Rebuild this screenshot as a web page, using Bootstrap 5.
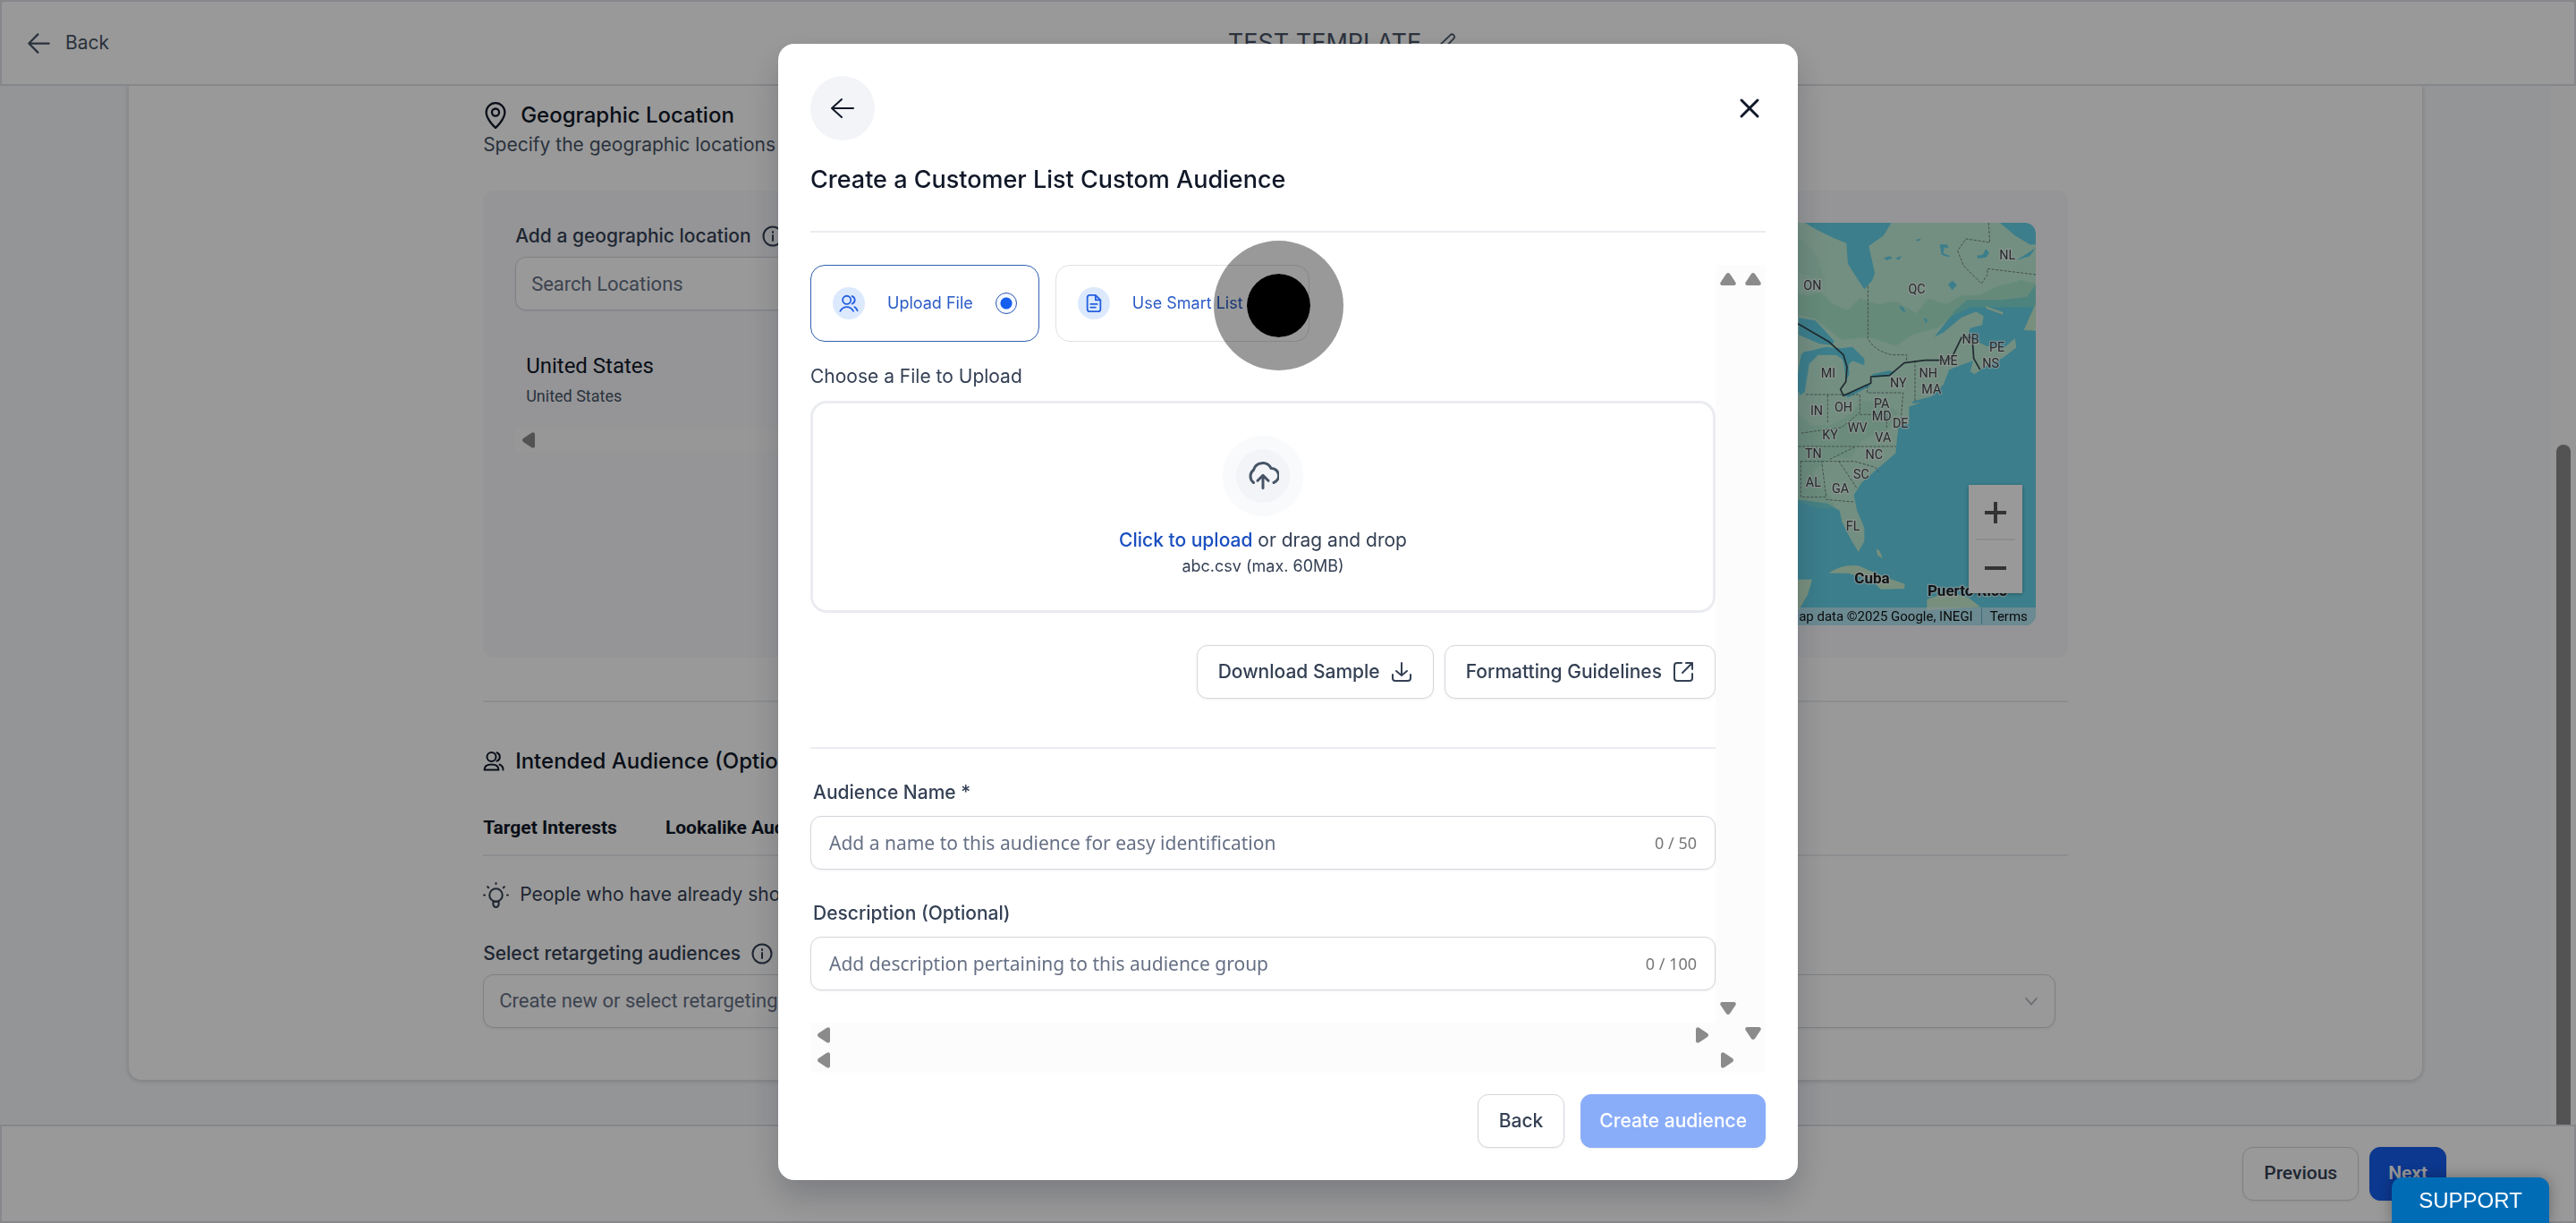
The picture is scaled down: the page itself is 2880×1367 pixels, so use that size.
<!DOCTYPE html>
<html lang="en">
<head>
<meta charset="utf-8">
<meta name="viewport" content="width=device-width, initial-scale=1">
<title>Create a Customer List Custom Audience</title>
<link href="https://cdn.jsdelivr.net/npm/bootstrap@5.3.0/dist/css/bootstrap.min.css" rel="stylesheet">
<style>
:root{--ink:#101828;--body:#344054;--muted:#667085;--line:#d3d6dc;--soft:#eaecf0;--blue:#155eef}
body{font-family:Inter,"Liberation Sans",sans-serif;font-size:21px;line-height:30px;color:var(--body);background:#f7f9fc}
.shell{height:100vh}
svg{flex:none;fill:none;stroke:currentColor;stroke-width:2;stroke-linecap:round;stroke-linejoin:round}
.roboto{font-family:Roboto,"Liberation Sans",sans-serif}
.topbar{height:96px;border:2px solid #dfe1e6;padding:0 28px}
.crumb{color:#475467;text-decoration:none;gap:16px}
.doc-title{font-size:27px;color:#475467;padding-left:120px}
.workarea{min-height:0}
.sheet{max-width:2564px;width:90%;padding:18px 0 58px;border-radius:0 0 14px 14px;box-shadow:0 1px 5px 1px rgba(16,24,40,.16)}
.sheet-inner{width:69.1%}
.gutter{width:28px;background:#fcfcfc}
.gutter-thumb{width:16px;height:65.5%;background:#8b8b8b;border-radius:8px 8px 0 0}
.section-title{font-size:24px;line-height:30px;font-weight:500;color:var(--ink)}
.title-geo{gap:14px}
.intro{margin-top:3px;color:#475467}
.geo-panel{background:#f8f9fc;border-radius:12px;padding:36px;margin-top:36px;height:522px}
.field-label{font-weight:500}
.field{height:60px;border:1px solid var(--line);border-radius:12px;padding:0 20px;font-size:21px;color:var(--body);box-shadow:0 1px 3px rgba(16,24,40,.06)}
.field::placeholder{color:var(--muted)}
.roboto.field{font-size:22px;padding:0 17px}
.place{padding:47px 12px 20px}
.place-name{font-size:24px;color:var(--ink)}
.place-sub{font-size:18px;color:#475467}
.map-box{border-radius:12px;background:#64d2e8}
.map-credit{right:0;bottom:0;height:20px;font-size:15px;line-height:20px;color:#111;background:rgba(228,242,248,.62);padding:0 9px}
.map-credit a{color:#111;text-decoration:none;border-left:1px solid #64b4c8;padding-left:9px;margin-left:9px}
.map-zoom{right:15px;bottom:36px;width:60px;height:121px;background:#fff;box-shadow:0 1px 4px rgba(0,0,0,.3)}
.map-zoom button{border:0;background:none;color:#555;height:60px}
.map-zoom svg{stroke-width:4;stroke-linecap:butt}
.state-names{font:400 43px Roboto,sans-serif;fill:#44484e;stroke:#fff;stroke-opacity:.6;stroke-width:8px;paint-order:stroke}
.land-names{font:700 51px Roboto,sans-serif;fill:#1d2226;stroke:#fff;stroke-opacity:.6;stroke-width:8px;paint-order:stroke}
.rule{border-top:2px solid var(--soft)}
.title-aud{margin-top:51px}
.tabs-line{border-bottom:2px solid var(--soft);height:51px;gap:54px;margin-top:40px}
.tabs-line button{border:0;background:none;padding:0;font-weight:700;font-size:21px;color:var(--ink)}
.label-ret{margin-top:36px}
.pick{height:60px;border:1px solid var(--line);border-radius:12px;padding:0 17px;font-size:22px;line-height:58px;color:var(--muted);margin-right:14px;width:auto;box-shadow:0 1px 3px rgba(16,24,40,.08);background-size:20px 20px;background-position:right 16px center;--bs-form-select-bg-img:url("data:image/svg+xml,%3csvg xmlns='http://www.w3.org/2000/svg' viewBox='0 0 22 22'%3e%3cpath fill='none' stroke='%23b4bac4' stroke-width='2' d='m4 7 7 8 7-8'/%3e%3c/svg%3e")}
.bottombar{height:110px;border:2px solid #dfe1e6;padding:0 143px;gap:12px}
.act{height:60px;border-radius:12px;border:1px solid var(--line);background:#fff;color:var(--body);font-size:21px;font-weight:500;padding:0 23px;box-shadow:0 1px 3px rgba(16,24,40,.06)}
.act:hover{background:#f9fafb;border-color:var(--line)}
.act-blue,.act-blue:hover{background:var(--blue);border-color:var(--blue);color:#fff;font-weight:600;padding:0 20px}
.act-off:disabled{background:#8aadf9;border-color:#8aadf9;color:#fff;opacity:1;padding:0 20px}
.modal-backdrop.show{opacity:.4}
.modal-dialog.aud{max-width:1140px;margin:49px auto 0}
.aud .modal-content{border:0;border-radius:18px;padding:36px;color:var(--body);box-shadow:0 18px 36px rgba(16,24,40,.22)}
.round-back{width:72px;height:72px;background:#f2f4f7;color:var(--ink);padding:0}
.bare{border:0;background:none;color:var(--ink);padding:0}
.aud-title{font-size:27px;line-height:36px;font-weight:500;color:var(--ink);margin:26px 0 39px}
.pane{padding-top:36px}
.sources{gap:18px}
.choice{height:86px;border:1px solid #dfe1e6;border-radius:16px;padding:0 24px;gap:25px;font-size:18px;color:#2a5bc5}
.choice.on{border-color:#3060b0}
.bubble{width:36px;height:36px;background:#dce9fd;color:#2560e0}
.choice .form-check-input{width:24px;height:24px;margin:0;border:1px solid #2a55b0;background-color:#f5f9ff}
.choice .form-check-input:checked{background-image:radial-gradient(circle,#155eef 0 6px,transparent 7px)}
.drop{height:237px;border:3px solid var(--soft);border-radius:18px;padding-top:36px}
.halo{width:90px;height:90px;background:#f2f4f7;border:15px solid #f9fafb;color:#475467}
.lead-in{margin-top:12px}
.drop a{color:#1a4fbf;font-weight:500;text-decoration:none}
.hint{font-size:18px;line-height:28px}
.tools{gap:12px;margin-top:36px}
.split{margin-top:54px}
.cap{padding-left:3px;margin:34px 0 11px}
.noto{font-family:"Noto Sans","Open Sans",sans-serif}
.counted .field{padding-right:110px}
.last{margin-bottom:36px}
.count{right:21px;top:0;line-height:60px;font-size:18px;color:#777}
.rail{width:28px;background:#fcfcfc;color:#8b8b8b;padding:9px 0}
.rail svg,.strip svg{fill:currentColor;stroke:none}
.strip{height:28px;background:#fcfcfc;color:#8b8b8b;padding:0 8px}
.corner{width:28px;background:#fcfcfc}
.finish{gap:18px}
.help-tab{right:30px;bottom:0;z-index:1070;width:176px;height:51px;border:0;border-radius:12px 12px 0 0;background:#006cb6;color:#fff;font:24px/51px "Liberation Sans",Arial,sans-serif;box-shadow:0 0 16px rgba(0,0,0,.3);padding:0}
.tap{left:calc(50% - 83px);top:269px;width:145px;height:145px;border:37px solid rgba(0,0,0,.4);background:#000;background-clip:padding-box;z-index:1071;pointer-events:none}
</style>
</head>
<body>
<svg class="d-none">
 <symbol id="left" viewBox="0 0 24 24"><path d="M22 12H2m9-9-9 9 9 9"/></symbol>
 <symbol id="info" viewBox="0 0 24 24"><circle cx="12" cy="12" r="10.5"/><path d="M12 11v6m0-10v1"/></symbol>
 <symbol id="users" viewBox="0 0 24 24"><circle cx="9.500" cy="7" r="5"/><path d="M1.500 21.500c0-4 3.500-6 8-6s8 2 8 6zM15.500 2.300a5 5 0 0 1 0 9.400M18.500 15.500c2.500 1 4 3 4 6"/></symbol>
 <symbol id="tri-l" viewBox="0 0 14 18"><path d="M14 2v14q-1 3-4 1L1 11q-2-2 0-4l9-6q3-2 4 1z"/></symbol>
 <symbol id="tri-r" viewBox="0 0 14 18"><path d="M0 2v14q1 3 4 1l9-6q2-2 0-4L4 1Q1-1 0 2z"/></symbol>
 <symbol id="tri-u" viewBox="0 0 18 14"><path d="M2 14h14q3-1 1-4L11 1Q9-1 7 1l-6 9q-2 3 1 4z"/></symbol>
 <symbol id="tri-d" viewBox="0 0 18 14"><path d="M2 0h14q3 1 1 4l-6 9q-2 2-4 0L1 4Q-1 1 2 0z"/></symbol>
</svg>

<div class="shell d-flex flex-column overflow-hidden">
 <header class="topbar bg-white d-flex align-items-center position-relative flex-shrink-0">
  <a href="#" class="crumb d-flex align-items-center"><svg width="27" height="27"><use href="#left"/></svg>Back</a>
  <div class="doc-title d-flex align-items-center gap-3 position-absolute start-50 translate-middle-x text-nowrap"><span>TEST TEMPLATE</span>
   <svg width="22" height="22" viewBox="0 0 24 24"><path d="M2 22l1-6L17 2.500a2.800 2.800 0 0 1 4.500 4L8 20.500z"/></svg></div>
 </header>

 <div class="workarea d-flex flex-grow-1 overflow-hidden">
  <main class="flex-grow-1">
   <div class="sheet bg-white mx-auto"><div class="sheet-inner mx-auto">
    <h2 class="section-title title-geo d-flex align-items-center mb-0"><svg width="28" height="30" viewBox="0 0 24 26"><path d="M12 25s9-8 9-15A9 9 0 0 0 3 10c0 7 9 15 9 15z"/><circle cx="12" cy="10" r="3.500"/></svg>Geographic Location</h2>
    <div class="intro">Specify the geographic locations you want to target</div>
    <section class="geo-panel d-flex gap-4">
     <div class="w-50 d-flex flex-column">
      <label for="loc" class="field-label d-flex align-items-center gap-2 mb-2"><span class="me-1">Add a geographic location</span><svg width="24" height="24"><use href="#info"/></svg></label>
      <input id="loc" class="field roboto w-100 bg-white" type="text" placeholder="Search Locations">
      <div class="place roboto"><div class="place-name">United States</div><div class="place-sub mt-1">United States</div></div>
      <div class="strip d-flex align-items-center justify-content-between"><svg width="14" height="18"><use href="#tri-l"/></svg><svg width="14" height="18"><use href="#tri-r"/></svg></div>
     </div>
     <div class="map-box flex-grow-1 position-relative overflow-hidden roboto">
      <svg class="position-absolute end-0 top-0" width="295" height="450" viewBox="0 0 885 1350">
       <g transform="translate(75 -12)" stroke="none">
        <path fill="#c0eed8" d="M-75 12H35l40 23 55 27 45 18 5 70 35 55 20 30 27-30 8-25-20-90 50-35 25-43h365l50 43 50 30h20v135l-30 40-80 10H580l-40 35-70 90 30-15 60-50 50-20 25 15-5 30-40 10-10 30 65 30 55 10 40-35 5 30-45 35-60 30-35 25-15-10 10-35-30 10-50 20-20 50-40 40-60 15-15 20v55l-35 10-5 40-5 50-65 55-50 45-25 40 10 50 25 60v45l-20 35-25-40-30-60-8-38-40-24-90-12-90-5z"/>
        <path fill="#c8efd0" d="M770 372l40-90v92zM640 290l60 22 0 8-55-20zM384 620l40-6-35 14z"/>
        <g fill="#97e2c2" opacity=".55"><path d="M-20 240l60 15 50-10 40 40 50 20 40-40 60 20 60-10 70 40 40-50 60 20 50-30 60 0 60-30 80-20 100 20v60l-60 10H590l-60 30-50 40-80 20-60 40-90-30-90 10-90-70-80-20-30-20z"/><path d="M0 640l60 50 60 0 60-30 50-50 70 0 50 40-40 60-80 30-40 60-70 0-60 50 50 60 30 60-60 0-90-30z" opacity=".6"/><path d="M15 60l60 60 30 90-90-30z" opacity=".4"/></g>
        <g fill="#64d2e8"><path d="M15 330l55 10 25 25 40 45-10 12-40-4-70-30zM60 440l45-12 50 5 40-5 40 40 0 22-40-15-15 15-10-15-30-20-60 0-30 30-15 95-15 10-15-30 10-60 8-45 10-10z"/><path d="M150 440l30 30 5 50-10 20-10-60zM165 590l80-38 12 6-75 40zM262 520l55-12 20 6-20 12-55 6zM300 130l20-6 10 6-20 8zM338 132l22-10-8 14zM488 85l25 0 5 12-15-2-3 20 22 8-6 4-22-8zM612 122l20-2 10-20 12 12-10 16-28 4zM745 138l65-42-20 28zM516 220l14-14 16 14-16 18zM352 290l14 6 8 18-14-8zM405 70l22-6-10 10zM434 330l14 8-8 12z"/></g>
       </g>
       <g transform="translate(0 -147) scale(1 1.033)" fill="#c8efd0" stroke="none"><path d="M190 1280q40-30 100-25l70 30 85 30 0 15-80 2-30-30-80-22zM30 1300l105 0-15 50-30 50-60 10zM520 1365l70-25 70 20 40 30-180 10zM350 1200l12 8 10 25-18-12z"/></g>
       <g transform="translate(75 -12)"><path stroke="#6f8580" stroke-width="3" stroke-dasharray="7 7" d="M247 225v175q20 40 80 55h50v18M652 12l4 66-80-12-28 40 20 50 60 60 20-30 0-20 162 20M405 475v135M245 560v22h120l-8 100M40 588h180v60l-60 50-140 20M112 590v90M15 762h325M120 805l80-40M22 812h180l70 20 10 15M22 812v120h85l-15-120M150 812l60 90M107 940l90 8M220 655h90v50"/>
        <path stroke="#33474f" stroke-width="5" d="M-40 325l60 30 95 55 50 45 12 40-4 50-18 25 10 22 92-42v-22l62-4 50-42 70-9h75l15-10 32-66 36 0 5 70 20 35"/></g>
       <g class="state-names" text-anchor="middle"><text x="136" y="226">ON</text><text x="486" y="236">QC</text><text x="790" y="123">NL</text><text x="666" y="406">NB</text><text x="755" y="433">PE</text><text x="734" y="487">NS</text><text x="592" y="477">ME</text><text x="524" y="520">NH</text><text x="535" y="573">MA</text><text x="424" y="551">NY</text><text x="189" y="518">MI</text><text x="150" y="644">IN</text><text x="240" y="632">OH</text><text x="368" y="622">PA</text><text x="368" y="663">MD</text><text x="431" y="686">DE</text><text x="287" y="703">WV</text><text x="195" y="726">KY</text><text x="373" y="736">VA</text><text x="139" y="789">TN</text><text x="343" y="793">NC</text><text x="300" y="857">SC</text><text x="139" y="884">AL</text><text x="230" y="906">GA</text><text x="272" y="1032">FL</text></g>
       <g class="land-names" text-anchor="middle"><text x="336" y="1208">Cuba</text><text x="656" y="1251">Puerto Rico</text></g>
      </svg>
      <div class="map-credit position-absolute text-nowrap">Map data ©2025 Google, INEGI<a href="#">Terms</a></div>
      <div class="map-zoom position-absolute d-flex flex-column"><button aria-label="Zoom in"><svg width="26" height="26" viewBox="0 0 26 26"><path d="M1 13h24M13 1v24"/></svg></button><div class="rule mx-2"></div><button aria-label="Zoom out"><svg width="26" height="26" viewBox="0 0 26 26"><path d="M1 13h24"/></svg></button></div>
     </div>
    </section>
    <div class="rule mt-5"></div>
    <h2 class="section-title title-aud d-flex align-items-center gap-2 mb-0"><svg class="me-1" width="24" height="24"><use href="#users"/></svg>Intended Audience (Optional)</h2>
    <nav class="tabs-line roboto d-flex align-items-start pt-1"><button>Target Interests</button><button>Lookalike Audiences</button><button>Retargeting</button></nav>
    <div class="d-flex align-items-center gap-2 mt-4 pt-1"><svg class="me-1" width="29" height="29" viewBox="0 0 28 28"><circle cx="14" cy="14" r="7"/><path d="M11 21v3a3 3 0 0 0 6 0v-3zM14 1v1M1 14h1M26 14h1M5 5l1 1M23 5l-1 1"/></svg>People who have already shown interest in your business</div>
    <label for="ret" class="field-label label-ret d-flex align-items-center gap-2 mb-2"><span class="me-1">Select retargeting audiences</span><svg width="24" height="24"><use href="#info"/></svg></label>
    <div class="d-grid"><select id="ret" class="form-select pick roboto"><option>Create new or select retargeting audiences</option></select></div>
   </div></div>
  </main>
  <div class="gutter d-flex align-items-end justify-content-center"><div class="gutter-thumb"></div></div>
 </div>

 <footer class="bottombar bg-white d-flex align-items-center justify-content-end flex-shrink-0">
  <button class="btn act roboto">Previous</button><button class="btn act act-blue roboto">Next</button>
 </footer>
</div>

<div class="modal-backdrop show"></div>
<div class="modal d-block overflow-hidden" tabindex="-1" role="dialog" aria-labelledby="audT">
 <div class="modal-dialog aud"><div class="modal-content">
  <div class="d-flex align-items-center justify-content-between">
   <button class="btn round-back rounded-circle d-flex align-items-center justify-content-center" aria-label="Go back"><svg width="28" height="28" viewBox="0 0 28 28" stroke-width="3"><path d="M26 14H2M13 4 2 14l11 10"/></svg></button>
   <button class="bare px-1 d-flex" aria-label="Close"><svg width="28" height="28" viewBox="0 0 28 28"><path stroke-width="3" d="m5 5 18 18M23 5 5 23"/></svg></button>
  </div>
  <h1 class="aud-title" id="audT">Create a Customer List Custom Audience</h1>
  <div class="rule"></div>
  <div class="pane">
   <div class="d-flex">
    <div class="flex-grow-1">
     <div class="d-flex">
      <div class="flex-grow-1">
       <div class="sources d-flex">
        <label class="choice on d-flex align-items-center"><span class="bubble rounded-circle d-flex align-items-center justify-content-center"><svg width="22" height="22" viewBox="0 0 24 24"><circle cx="9.500" cy="8" r="5"/><path d="M1.500 21.500q3-5 8-5t8 5M16 3.300a5 5 0 0 1 0 9.400M19 16.500q2.500 1.500 3.500 4.500"/></svg></span>Upload File<input class="form-check-input" type="radio" name="src" checked></label>
        <label class="choice d-flex align-items-center"><span class="bubble rounded-circle d-flex align-items-center justify-content-center"><svg width="22" height="22" viewBox="0 0 24 24"><path d="M14 2H7a3 3 0 0 0-3 3v14a3 3 0 0 0 3 3h10a3 3 0 0 0 3-3V8zM14 2v6h6M8 13h8M8 17h6"/></svg></span>Use Smart List<input class="form-check-input" type="radio" name="src"></label>
       </div>
       <div class="mt-4 mb-2 pb-1">Choose a File to Upload</div>
       <div class="drop d-flex flex-column align-items-center">
        <div class="halo rounded-circle d-flex align-items-center justify-content-center flex-shrink-0"><svg width="36" height="36" viewBox="0 0 24 24"><path d="M5 17A6 6 0 0 1 5 7.500a7 7 0 0 1 13-1.200A5.500 5.500 0 0 1 20 17M12 21v-9M8 15.500l4-4 4 4"/></svg></div>
        <div class="lead-in"><a href="#">Click to upload</a> or drag and drop</div>
        <div class="hint">abc.csv (max. 60MB)</div>
       </div>
       <div class="d-flex justify-content-end tools">
        <button class="btn act d-flex align-items-center gap-2">Download Sample<svg class="ms-1" width="24" height="24" viewBox="0 0 24 24"><path d="M2 15v4a3 3 0 0 0 3 3h14a3 3 0 0 0 3-3v-4M12 2v14m-6-5 6 5 6-5"/></svg></button>
        <button class="btn act d-flex align-items-center gap-2">Formatting Guidelines<svg class="ms-1" width="24" height="24" viewBox="0 0 24 24"><path d="M10 2H5a3 3 0 0 0-3 3v14a3 3 0 0 0 3 3h14a3 3 0 0 0 3-3v-5M15 2h7v7M22 2 11 13"/></svg></button>
       </div>
       <div class="rule split"></div>
       <label for="an" class="field-label d-block cap">Audience Name *</label>
       <div class="counted position-relative"><input id="an" class="field noto w-100 bg-white" type="text" placeholder="Add a name to this audience for easy identification"><span class="count noto position-absolute">0 / 50</span></div>
       <label for="ad" class="field-label d-block cap">Description (Optional)</label>
       <div class="counted last position-relative"><input id="ad" class="field noto w-100 bg-white" type="text" placeholder="Add description pertaining to this audience group"><span class="count noto position-absolute">0 / 100</span></div>
      </div>
      <div class="rail d-flex flex-column align-items-center justify-content-between"><svg width="18" height="14"><use href="#tri-u"/></svg><svg width="18" height="14"><use href="#tri-d"/></svg></div>
     </div>
     <div class="d-flex"><div class="strip flex-grow-1 d-flex align-items-center justify-content-between"><svg width="14" height="18"><use href="#tri-l"/></svg><svg width="14" height="18"><use href="#tri-r"/></svg></div><div class="corner"></div></div>
    </div>
    <div class="rail d-flex flex-column align-items-center justify-content-between"><svg width="18" height="14"><use href="#tri-u"/></svg><svg width="18" height="14"><use href="#tri-d"/></svg></div>
   </div>
   <div class="d-flex"><div class="strip flex-grow-1 d-flex align-items-center justify-content-between"><svg width="14" height="18"><use href="#tri-l"/></svg><svg width="14" height="18"><use href="#tri-r"/></svg></div><div class="corner"></div></div>
  </div>
  <div class="finish d-flex justify-content-end mt-4"><button class="btn act">Back</button><button class="btn act act-off" disabled>Create audience</button></div>
 </div></div>
</div>
<button class="help-tab position-fixed">SUPPORT</button>
<div class="tap rounded-circle position-fixed"></div>
<script src="https://cdn.jsdelivr.net/npm/bootstrap@5.3.0/dist/js/bootstrap.bundle.min.js"></script>
</body>
</html>
